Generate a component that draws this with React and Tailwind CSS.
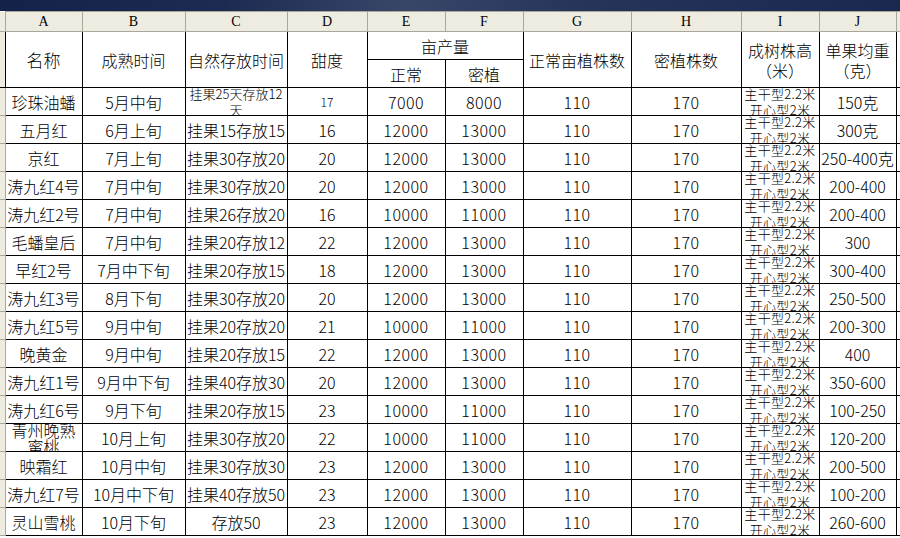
import React from "react";

const cols = ["A", "B", "C", "D", "E", "F", "G", "H", "I", "J"];
const widths = [5, 77, 103, 102, 80, 78, 78, 108, 110, 78, 77, 4];

const rows = [
  ["珍珠油蟠", "5月中旬", "挂果25天存放12天", "17", "7000", "8000", "110", "170", "150克"],
  ["五月红", "6月上旬", "挂果15存放15", "16", "12000", "13000", "110", "170", "300克"],
  ["京红", "7月上旬", "挂果30存放20", "20", "12000", "13000", "110", "170", "250-400克"],
  ["涛九红4号", "7月中旬", "挂果30存放20", "20", "12000", "13000", "110", "170", "200-400"],
  ["涛九红2号", "7月中旬", "挂果26存放20", "16", "10000", "11000", "110", "170", "200-400"],
  ["毛蟠皇后", "7月中旬", "挂果20存放12", "22", "12000", "13000", "110", "170", "300"],
  ["早红2号", "7月中下旬", "挂果20存放15", "18", "12000", "13000", "110", "170", "300-400"],
  ["涛九红3号", "8月下旬", "挂果30存放20", "20", "12000", "13000", "110", "170", "250-500"],
  ["涛九红5号", "9月中旬", "挂果20存放20", "21", "10000", "11000", "110", "170", "200-300"],
  ["晚黄金", "9月中旬", "挂果20存放15", "22", "12000", "13000", "110", "170", "400"],
  ["涛九红1号", "9月中下旬", "挂果40存放30", "20", "12000", "13000", "110", "170", "350-600"],
  ["涛九红6号", "9月下旬", "挂果20存放15", "23", "10000", "11000", "110", "170", "100-250"],
  ["青州晚熟蜜桃", "10月上旬", "挂果30存放20", "22", "10000", "11000", "110", "170", "120-200"],
  ["映霜红", "10月中旬", "挂果30存放30", "23", "12000", "13000", "110", "170", "200-500"],
  ["涛九红7号", "10月中下旬", "挂果40存放50", "23", "12000", "13000", "110", "170", "100-200"],
  ["灵山雪桃", "10月下旬", "存放50", "23", "12000", "13000", "110", "170", "260-600"],
];

function Cell({ children, className = "" }) {
  return (
    <div className={"h-[27px] overflow-hidden flex items-center justify-center text-center leading-[16px] " + className}>
      <div>{children}</div>
    </div>
  );
}

export default function App() {
  return (
    <div className="w-[900px] h-[538px] overflow-hidden bg-white font-['Noto_Sans_CJK_SC',sans-serif] font-light text-black">
      <div className="h-[11px] bg-[linear-gradient(90deg,#14224a_0%,#1d2b52_25%,#3a4668_45%,#26345a_65%,#1a2850_100%)]" />
      <table className="table-fixed border-collapse" style={{ width: 900 }}>
        <colgroup>
          {widths.map((w, i) => (
            <col key={i} style={{ width: w }} />
          ))}
        </colgroup>
        <thead>
          <tr className="h-[20px] bg-[#eeece1]">
            <th className="p-0 border-r border-b border-[#a8a79a]" />
            {cols.map((c) => (
              <th
                key={c}
                className="p-0 h-[20px] border border-[#a8a79a] font-['Liberation_Serif',serif] font-normal text-[14px] leading-[19px]"
              >
                {c}
              </th>
            ))}
            <th className="p-0 border border-[#a8a79a]" />
          </tr>
        </thead>
        <tbody className="text-[16px]">
          <tr className="h-[28px]">
            <td rowSpan={2} className="p-0 bg-[#eeece1] border-r border-b border-black" />
            <td rowSpan={2} className="p-0 border border-black text-center text-[17px]">名称</td>
            <td rowSpan={2} className="p-0 border border-black text-center">成熟时间</td>
            <td rowSpan={2} className="p-0 border border-black text-center">自然存放时间</td>
            <td rowSpan={2} className="p-0 border border-black text-center">甜度</td>
            <td colSpan={2} className="p-0 border border-black">
              <Cell>亩产量</Cell>
            </td>
            <td rowSpan={2} className="p-0 border border-black text-center">正常亩植株数</td>
            <td rowSpan={2} className="p-0 border border-black text-center">密植株数</td>
            <td rowSpan={2} className="p-0 border border-black text-center leading-[20px]">
              成树株高
              <br />
              （米）
            </td>
            <td rowSpan={2} className="p-0 border border-black text-center leading-[20px]">
              单果均重
              <br />
              （克）
            </td>
            <td rowSpan={2} className="p-0 border-l border-b border-black" />
          </tr>
          <tr className="h-[28px]">
            <td className="p-0 border border-black">
              <Cell>正常</Cell>
            </td>
            <td className="p-0 border border-black">
              <Cell>密植</Cell>
            </td>
          </tr>
          {rows.map((r, i) => (
            <tr key={i} className="h-[28px]">
              <td className="p-0 bg-[#eeece1] border-r border-b border-[#a8a79a]" />
              <td className="p-0 border border-black">
                <Cell className="px-[1px]">{r[0]}</Cell>
              </td>
              <td className="p-0 border border-black">
                <Cell>{r[1]}</Cell>
              </td>
              <td className="p-0 border border-black">
                <Cell className={i === 0 ? "text-[13px] leading-[14px] px-[2px]" : ""}>{r[2]}</Cell>
              </td>
              <td className="p-0 border border-black">
                <Cell className={i === 0 ? "text-[12px]" : ""}>{r[3]}</Cell>
              </td>
              <td className="p-0 border border-black">
                <Cell className="tracking-[0.5px]">{r[4]}</Cell>
              </td>
              <td className="p-0 border border-black">
                <Cell className="tracking-[0.5px]">{r[5]}</Cell>
              </td>
              <td className="p-0 border border-black">
                <Cell className="tracking-[0.5px]">{r[6]}</Cell>
              </td>
              <td className="p-0 border border-black">
                <Cell className="tracking-[0.5px]">{r[7]}</Cell>
              </td>
              <td className="p-0 border border-black">
                <Cell className="text-[13px] leading-[15px] tracking-[0.3px]">
                  主干型2.2米
                  <br />
                  开心型2米
                </Cell>
              </td>
              <td className="p-0 border border-black">
                <Cell className="whitespace-nowrap">{r[8]}</Cell>
              </td>
              <td className="p-0 border-l border-b border-black" />
            </tr>
          ))}
        </tbody>
      </table>
    </div>
  );
}
